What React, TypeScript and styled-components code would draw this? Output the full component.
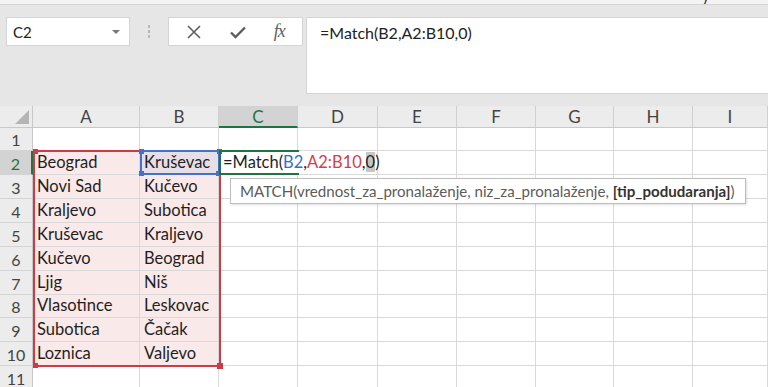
import React from "react";
import styled, { createGlobalStyle } from "styled-components";

const Global = createGlobalStyle`
  html, body { margin: 0; padding: 0; background: #ffffff; }
  body { font-family: Lato, "Open Sans", sans-serif; overflow: hidden; }
  * { box-sizing: border-box; }
`;

const Page = styled.div`
  width: 768px;
  height: 387px;
  overflow: hidden;
  display: flex;
  flex-direction: column;
  background: #ffffff;
`;

const RibbonEdge = styled.div`
  flex-shrink: 0;
  height: 5px;
  background: #f3f3f3;
  border-bottom: 1px solid #d5d5d5;
  position: relative;
  overflow: hidden;
`;

const CutText = styled.span`
  position: absolute;
  left: 702px;
  top: -14px;
  font-size: 15px;
  color: #333;
`;

const Toolbar = styled.div`
  flex-shrink: 0;
  height: 101px;
  background: #e6e6e6;
  display: flex;
  align-items: flex-start;
  padding: 12px 0 0 6px;
`;

const NameBox = styled.div`
  width: 124px;
  height: 29px;
  background: #ffffff;
  border: 1px solid #d4d4d4;
  display: flex;
  align-items: center;
  justify-content: space-between;
  padding: 0 9px 0 6px;
  font-size: 15px;
  color: #222;
`;

const Caret = styled.span`
  width: 0;
  height: 0;
  border-left: 4px solid transparent;
  border-right: 4px solid transparent;
  border-top: 4px solid #777;
`;

const Grip = styled.div`
  width: 38px;
  height: 29px;
  display: flex;
  flex-direction: column;
  align-items: center;
  justify-content: center;
  gap: 2px;
  & > span { width: 2px; height: 3px; background: #b8b8b8; }
`;

const ButtonBox = styled.div`
  width: 135px;
  height: 29px;
  background: #ffffff;
  border: 1px solid #d4d4d4;
  display: flex;
  align-items: center;
  justify-content: space-around;
  padding: 0 4px;
  color: #5e5e5e;
`;

const Fx = styled.span`
  font-family: "Liberation Serif", "DejaVu Serif", serif;
  font-style: italic;
  font-size: 18px;
  color: #5e5e5e;
  letter-spacing: -1px;
`;

const FormulaBox = styled.div`
  margin-left: 3px;
  flex: 1;
  height: 77px;
  background: #ffffff;
  border: 1px solid #d4d4d4;
  border-right: none;
  padding: 5px 0 0 13px;
  font-size: 16px;
  color: #222;
`;

const SheetWrap = styled.div`
  position: relative;
  flex: 1;
`;

const Grid = styled.div`
  display: grid;
  grid-template-columns: 33px 107px 79px 79px 80px 79px 79px 78px 79px 1fr;
  grid-template-rows: 22px 23px 24px 24px 24px 24px 24px 24px 23px 24px 24px 24px;
`;

const Corner = styled.div`
  background: #ececec;
  border-right: 1px solid #c8c8c8;
  border-bottom: 1px solid #c8c8c8;
  position: relative;
  &::after {
    content: "";
    position: absolute;
    right: 3px;
    bottom: 3px;
    width: 0;
    height: 0;
    border-left: 14px solid transparent;
    border-bottom: 14px solid #b5b5b5;
  }
`;

const ColHead = styled.div<{ $active?: boolean }>`
  background: ${(p) => (p.$active ? "#d3d3d3" : "#ececec")};
  border-right: 1px solid #d0d0d0;
  border-bottom: ${(p) => (p.$active ? "2px solid #217346" : "1px solid #c8c8c8")};
  color: ${(p) => (p.$active ? "#217346" : "#444")};
  font-size: 17px;
  display: flex;
  align-items: center;
  justify-content: center;
`;

const RowHead = styled.div<{ $active?: boolean }>`
  background: ${(p) => (p.$active ? "#d3d3d3" : "#ececec")};
  border-bottom: 1px solid #d4d4d4;
  border-right: ${(p) => (p.$active ? "2px solid #217346" : "1px solid #c8c8c8")};
  color: ${(p) => (p.$active ? "#217346" : "#444")};
  font-size: 16px;
  display: flex;
  align-items: center;
  justify-content: center;
  padding-top: 1px;
`;

const Cell = styled.div<{ $fill?: string; $open?: boolean }>`
  background: ${(p) => p.$fill || "#ffffff"};
  border-right: ${(p) => (p.$open ? "none" : "1px solid #d9d9d9")};
  border-bottom: 1px solid #d9d9d9;
  font-size: 16.5px;
  color: #1f1f1f;
  display: flex;
  align-items: flex-end;
  padding: 0 0 2px 4px;
  white-space: nowrap;
  overflow: visible;
  position: relative;
  z-index: ${(p) => (p.$open ? 2 : 0)};
`;

const Ref = styled.span<{ $c: string }>`
  color: ${(p) => p.$c};
`;

const Hilite = styled.span`
  background: #c6c6c6;
`;

const RangeBox = styled.div<{ $color: string }>`
  position: absolute;
  border: 2px solid ${(p) => p.$color};
  pointer-events: none;
  z-index: 3;
`;

const Handle = styled.span<{ $color: string; $size?: number }>`
  position: absolute;
  width: ${(p) => p.$size || 5}px;
  height: ${(p) => p.$size || 5}px;
  background: ${(p) => p.$color};
`;

const EditBox = styled.div`
  position: absolute;
  border-top: 2px solid #217346;
  border-bottom: 2px solid #217346;
  border-left: 2px solid #217346;
  z-index: 4;
`;

const Tooltip = styled.div`
  position: absolute;
  left: 230px;
  top: 72px;
  width: 516px;
  height: 26px;
  background: #ffffff;
  border: 1px solid #bdbdbd;
  box-shadow: 1px 1px 2px rgba(0, 0, 0, 0.12);
  font-size: 15.1px;
  color: #5b5b5b;
  display: flex;
  align-items: center;
  padding-left: 9px;
  white-space: nowrap;
  z-index: 6;
  & b { color: #333; font-weight: 700; }
`;

const cols = ["A", "B", "C", "D", "E", "F", "G", "H", "I"];
const dataA = ["Beograd", "Novi Sad", "Kraljevo", "Kruševac", "Kučevo", "Ljig", "Vlasotince", "Subotica", "Loznica"];
const dataB = ["Kruševac", "Kučevo", "Subotica", "Kraljevo", "Beograd", "Niš", "Leskovac", "Čačak", "Valjevo"];

const PINK = "#fae9e9";

export default function App() {
  const rows: React.ReactNode[] = [];
  for (let r = 1; r <= 11; r++) {
    rows.push(
      <RowHead key={`h${r}`} $active={r === 2}>
        {r}
      </RowHead>
    );
    cols.forEach((c) => {
      const key = `${c}${r}`;
      const inRange = r >= 2 && r <= 10 && (c === "A" || c === "B");
      let fill = inRange ? PINK : undefined;
      let content: React.ReactNode = null;
      if (inRange) content = c === "A" ? dataA[r - 2] : dataB[r - 2];
      if (key === "B2") fill = "#e6dfe8";
      if (key === "C2") {
        content = (
          <span>
            =Match(<Ref $c="#3a6cc6">B2</Ref>,<Ref $c="#d2404a">A2:B10</Ref>,<Hilite>0</Hilite>)
          </span>
        );
      }
      rows.push(
        <Cell key={key} $fill={fill} $open={key === "C2"}>
          {content}
        </Cell>
      );
    });
  }

  return (
    <Page>
      <Global />
      <RibbonEdge>
        <CutText>y</CutText>
      </RibbonEdge>
      <Toolbar>
        <NameBox>
          C2
          <Caret />
        </NameBox>
        <Grip>
          <span />
          <span />
          <span />
        </Grip>
        <ButtonBox>
          <svg width="16" height="16" viewBox="0 0 16 16">
            <path d="M2 2 L14 14 M14 2 L2 14" stroke="#5e5e5e" strokeWidth="1.6" fill="none" />
          </svg>
          <svg width="18" height="16" viewBox="0 0 18 16">
            <path d="M2 8.5 L6.5 13 L16 3.5" stroke="#5e5e5e" strokeWidth="2.4" fill="none" />
          </svg>
          <Fx>fx</Fx>
        </ButtonBox>
        <FormulaBox>=Match(B2,A2:B10,0)</FormulaBox>
      </Toolbar>
      <SheetWrap>
        <Grid>
          <Corner />
          {cols.map((c) => (
            <ColHead key={c} $active={c === "C"}>
              {c}
            </ColHead>
          ))}
          {rows}
        </Grid>
        <RangeBox $color="#cf3a44" style={{ left: 33, top: 44, width: 188, height: 217 }}>
          <Handle $color="#cf3a44" style={{ left: -2, top: -3 }} />
          <Handle $color="#cf3a44" style={{ right: -3, top: -3 }} />
          <Handle $color="#cf3a44" style={{ left: -2, bottom: -3 }} />
          <Handle $color="#cf3a44" $size={6} style={{ right: -4, bottom: -4 }} />
        </RangeBox>
        <RangeBox $color="#4472c4" style={{ left: 140, top: 44, width: 80, height: 25 }}>
          <Handle $color="#4472c4" style={{ left: -3, top: -3 }} />
          <Handle $color="#4472c4" style={{ left: -3, bottom: -3 }} />
          <Handle $color="#4472c4" style={{ right: -3, bottom: -3 }} />
        </RangeBox>
        <EditBox style={{ left: 219, top: 44, width: 80, height: 25 }} />
        <Tooltip>
          <span>
            MATCH(vrednost_za_pronalaženje, niz_za_pronalaženje, <b>[tip_podudaranja]</b>)
          </span>
        </Tooltip>
      </SheetWrap>
    </Page>
  );
}
